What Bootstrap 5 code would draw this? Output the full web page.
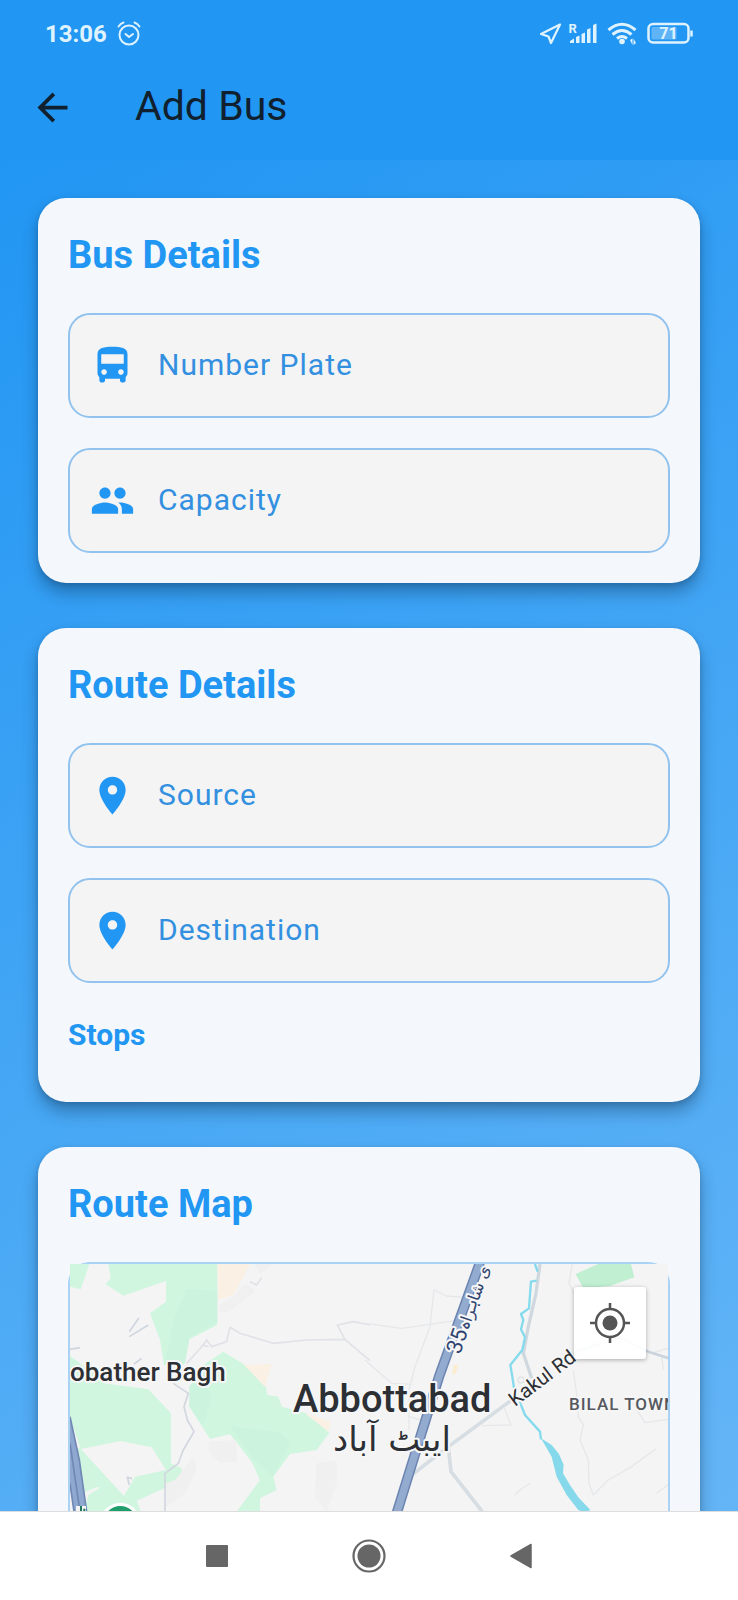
<!DOCTYPE html>
<html lang="en">
<head>
<meta charset="utf-8">
<meta name="viewport" content="width=device-width, initial-scale=1">
<title>Add Bus</title>
<link href="https://cdn.jsdelivr.net/npm/bootstrap@5.3.0/dist/css/bootstrap.min.css" rel="stylesheet">
<style>
  :root { --brand: #2196f3; --ink: #10202e; --grey: #666; }
  body { font-family: Roboto, "Noto Sans", sans-serif; background: var(--brand); }
  svg { display: block; }
  .top-area { background: var(--brand); }
  .status { height: 55px; padding: 13px 43px 0 45px; color: #dff3ff; }
  .clock { font-size: 24px; line-height: 28px; }
  .app-bar { height: 105px; padding: 0 30px; gap: 60px; color: var(--ink); }
  .app-bar h1 { font-size: 41px; line-height: 48px; padding-bottom: 4px; }
  .scroll-area { min-height: 0; overflow-y: auto; scrollbar-width: none; padding: 38px 38px 45px; gap: 45px;
    background: linear-gradient(151deg, #2196f3, #64b5f6); }
  .scroll-area::-webkit-scrollbar { display: none; }
  .panel { --bs-card-bg: #f4f8fc; border-radius: 28px; padding: 30px; color: var(--brand);
    box-shadow: 0 10px 16px rgba(0, 20, 40, .3), 0 2px 5px rgba(0, 20, 40, .16); flex-shrink: 0; }
  .panel h2 { font-size: 38px; line-height: 55px; margin-bottom: 30px; }
  .panel h3 { font-size: 30px; line-height: 40px; margin: 32px 0 17px; }
  .field-list { gap: 30px; }
  .field { height: 105px; padding: 0 20px; gap: 23px; border: 2px solid #92c3ee; border-radius: 22px; background: #f4f4f4;
    font-size: 30px; line-height: 48px; letter-spacing: 1px; color: #3390e0; }
  .field svg { width: 45px; height: 45px; flex: none; fill: var(--brand); }
  .field span { padding-bottom: 2px; }
  .field .form-control { flex: 1 1 0; min-width: 0; font-size: 30px; line-height: 48px; color: var(--ink); box-shadow: none; }
  .map-frame { border: 2px solid #a9d2f5; border-radius: 22px; }
  .map-frame > svg { width: 100%; height: 560px; }
  .halo { paint-order: stroke; stroke: #f6f6f6; stroke-width: 4px; stroke-linejoin: round; }
  .locate { top: 23px; right: 22px; width: 72px; height: 72px; background: rgba(255, 255, 255, .92);
    box-shadow: 0 1px 4px rgba(0, 0, 0, .3); border-radius: 3px; }
  .sys-nav { height: 89px; gap: 100px; background: #fff; border-top: 1px solid #ddd; }
  .sys-nav .btn { width: 52px; height: 52px; }
</style>
</head>
<body class="vh-100 d-flex flex-column overflow-hidden">

<header class="top-area">
  <div class="status d-flex align-items-center justify-content-between">
    <div class="d-flex align-items-center gap-2">
      <span class="clock fw-bold">13:06</span>
      <svg width="30" height="28" viewBox="1 0 30 28" fill="none" stroke="currentColor" stroke-width="2" stroke-linecap="round" stroke-linejoin="round" aria-hidden="true">
        <circle cx="15" cy="15" r="9.500"/><path d="M11.500 14l3.500 3 4-3M4.500 6.500q2-3 5-4M25.500 6.500q-2-3-5-4"/>
      </svg>
    </div>
    <svg width="156" height="28" viewBox="0 0 156 28" fill="none" stroke="currentColor" aria-hidden="true">
      <path d="M21 4.500L2 14l7.500 2.500L12 23z" stroke-width="2.200" stroke-linejoin="round"/>
      <g fill="currentColor" stroke="none">
        <path d="M31 23v-2l4-2.500v4.500zM37 23v-6l3.500-1.500v7.500zM42.500 23v-9l3.500-1.500v10.500zM48 23V9.500l3.500-1.500V23zM54 23V5l3.500-1.500V23z"/>
        <text x="29.500" y="13" font-size="13" font-weight="700">R</text>
        <circle cx="83" cy="21.500" r="2.800"/>
        <path d="M91 20l2.500-1.500v6.500zM94.500 18.500v6.500l2.500-2z"/>
      </g>
      <path d="M69.500 10q13.500-11.500 27 0M73.500 14.500q9.500-8 19 0M78 18.500q5-4 10 0" stroke-width="3"/>
      <rect x="109.500" y="4" width="40" height="18.500" rx="4.500" stroke-width="2.500"/>
      <rect x="112.500" y="7" width="25" height="12.500" rx="1" fill="#5fb4f8" stroke="none"/>
      <path d="M152.500 10.500v6" stroke-width="2.500"/>
      <text x="129.500" y="19" font-size="16" font-weight="700" text-anchor="middle" fill="currentColor" stroke="none">71</text>
    </svg>
  </div>
  <div class="app-bar d-flex align-items-center">
    <button type="button" class="btn border-0 p-0" aria-label="Back">
      <svg width="45" height="45" viewBox="0 0 24 24" fill="#10202e"><path d="M20 11H7.830l5.590-5.590L12 4l-8 8 8 8 1.410-1.410L7.830 13H20v-2z"/></svg>
    </button>
    <h1 class="fw-normal m-0">Add Bus</h1>
  </div>
</header>

<main class="scroll-area flex-grow-1 d-flex flex-column">
  <section class="card panel border-0">
    <h2 class="fw-bold">Bus Details</h2>
    <div class="field-list d-flex flex-column">
      <label class="field d-flex align-items-center" for="plate">
        <svg viewBox="0 0 24 24" aria-hidden="true"><path d="M4 16c0 .88.39 1.670 1 2.220V20c0 .55.45 1 1 1h1c.55 0 1-.45 1-1v-1h8v1c0 .55.45 1 1 1h1c.55 0 1-.45 1-1v-1.780c.61-.55 1-1.340 1-2.220V6c0-3.500-3.580-4-8-4s-8 .5-8 4v10zm3.500 1c-.83 0-1.500-.67-1.500-1.500S6.670 14 7.500 14s1.500.67 1.500 1.500S8.330 17 7.500 17zm9 0c-.83 0-1.500-.67-1.500-1.500s.67-1.500 1.500-1.500 1.500.67 1.500 1.500-.67 1.500-1.500 1.500zm1.500-6H6V6h12v5z"/></svg>
        <span class="text-nowrap">Number Plate</span>
        <input class="form-control border-0 bg-transparent p-0" id="plate" type="text">
      </label>
      <label class="field d-flex align-items-center" for="capacity">
        <svg viewBox="0 0 24 24" aria-hidden="true"><path d="M16 11c1.660 0 2.990-1.340 2.990-3S17.660 5 16 5c-1.660 0-3 1.340-3 3s1.340 3 3 3zm-8 0c1.660 0 2.990-1.340 2.990-3S9.660 5 8 5C6.340 5 5 6.340 5 8s1.340 3 3 3zm0 2c-2.330 0-7 1.170-7 3.500V19h14v-2.500c0-2.330-4.670-3.500-7-3.500zm8 0c-.29 0-.62.02-.97.05 1.160.84 1.970 1.970 1.970 3.450V19h6v-2.500c0-2.330-4.670-3.500-7-3.500z"/></svg>
        <span class="text-nowrap">Capacity</span>
        <input class="form-control border-0 bg-transparent p-0" id="capacity" type="text" inputmode="numeric">
      </label>
    </div>
  </section>

  <section class="card panel border-0">
    <h2 class="fw-bold">Route Details</h2>
    <div class="field-list d-flex flex-column">
      <label class="field d-flex align-items-center" for="source">
        <svg viewBox="0 0 24 24" aria-hidden="true"><path d="M12 2C8.130 2 5 5.130 5 9c0 5.250 7 13 7 13s7-7.750 7-13c0-3.870-3.130-7-7-7zm0 9.500c-1.380 0-2.500-1.120-2.500-2.500s1.120-2.500 2.500-2.500 2.500 1.120 2.500 2.500-1.120 2.500-2.500 2.500z"/></svg>
        <span class="text-nowrap">Source</span>
        <input class="form-control border-0 bg-transparent p-0" id="source" type="text">
      </label>
      <label class="field d-flex align-items-center" for="destination">
        <svg viewBox="0 0 24 24" aria-hidden="true"><path d="M12 2C8.130 2 5 5.130 5 9c0 5.250 7 13 7 13s7-7.750 7-13c0-3.870-3.130-7-7-7zm0 9.500c-1.380 0-2.500-1.120-2.500-2.500s1.120-2.500 2.500-2.500 2.500 1.120 2.500 2.500-1.120 2.500-2.500 2.500z"/></svg>
        <span class="text-nowrap">Destination</span>
        <input class="form-control border-0 bg-transparent p-0" id="destination" type="text">
      </label>
    </div>
    <h3 class="fw-bold">Stops</h3>
  </section>

  <section class="card panel border-0">
    <h2 class="fw-bold">Route Map</h2>
    <div class="map-frame position-relative">
      <svg viewBox="0 0 598 560" preserveAspectRatio="xMinYMin slice" role="img" aria-label="Map of Abbottabad">
        <rect width="1200" height="1200" fill="#f4f4f4"/>

        <!-- western half: parks, hills and minor roads -->
        <g transform="translate(-10 -14) scale(.3333)">
          <g fill="#d0f6e0">
            <path d="M30 42H88L62 118L30 110z"/>
            <path d="M145 42H472V225L388 268L375 340L360 352L312 345L300 270L270 190L318 155V93L190 137L137 103L152 85z"/>
            <path d="M30 318L95 365L130 400L265 418L333 490V640L365 655L368 690L230 752L242 785H72L85 735L122 712L108 712L72 728L50 600L62 590L182 573L275 592L318 660L225 680L192 738L62 597L30 500z"/>
            <path d="M490 305L555 345L618 410L622 435L655 440L665 470L740 490L808 548L770 600L690 612L640 680L650 720L600 745V785H530L600 690L575 635L510 553L450 567L388 470V410L430 345z"/>
          </g>
          <g fill="#c4f1da"><path d="M380 118L472 122V215L388 262L375 340L315 330L345 200z" opacity=".4"/><path d="M510 528L660 548L690 575L640 680L580 625z" opacity=".4"/><path d="M388 470V410L420 370L455 440L430 525z" opacity=".4"/></g>
          <g fill="#faf0e3"><path d="M472 42H570L520 135L475 150z"/><path d="M552 345L635 342L615 410z"/><path d="M735 490L812 515L805 545z"/></g>
          <g fill="#f0f0f0"><path d="M560 100L585 125L500 190L475 185L478 165L520 140z"/><path d="M585 42H640L600 72z"/><path d="M445 575L528 570L530 635L480 638L450 610z"/><path d="M345 690L400 620L410 655L375 730L318 770V700z"/><path d="M770 640L830 630V700L800 785L765 740z"/></g>
          <path d="M62 597L182 573L275 592L318 660L225 680L192 738z" fill="#f4f4f4"/>
          <g fill="none" stroke="#e0e2e7" stroke-width="5" stroke-linejoin="round">
            <path d="M380 340L430 285L440 270L455 290L500 275L510 232L540 250L640 280L740 270L855 268L930 332M855 268L832 225L880 215L930 225"/>
            <path d="M340 400L385 430L372 470L382 510L402 545L370 600L355 640L315 670V785" stroke="#d2d6df"/>
            <path d="M570 95L590 105L605 82M425 285L445 290"/>
            <path d="M208 260L265 225M208 245L237 203M30 298L60 293M222 342L245 325M208 705L202 682L216 686" stroke="#cfd6df"/>
          </g>
          <path d="M30 500L58 630L80 785H42L30 710z" fill="#8fa8d0"/>
          <path d="M30 500L58 630L80 785M30 580L60 785M30 700L42 785" fill="none" stroke="#6f88b4" stroke-width="5"/>
          <circle cx="181" cy="818" r="60" fill="#fff"/><circle cx="181" cy="818" r="50" fill="#1f9d6b"/>
          <path d="M48 785V768H78V785z" fill="#f4f4f4"/>
          <path d="M63 768V785M73 776V785" stroke="#1f7a5c" stroke-width="6"/>
        </g>

        <!-- eastern half: highway, river and side roads -->
        <g transform="translate(295 -14) scale(.3333)" fill="none" stroke-linejoin="round">
          <g stroke="#e5e7ea" stroke-width="4">
            <path d="M0 220L110 235L270 212M0 330L40 365L80 400L140 403M340 145L245 138L207 120L195 230L150 350L132 420V540M132 500L165 510M350 527L438 525L418 475"/>
            <path d="M622 42L612 100L628 130M625 360L635 430L640 500L655 525L645 570L670 630L672 700L685 735L730 690L800 650L872 597M450 735L465 720L495 700M875 730L915 700M800 455L840 518L912 508"/>
            <path d="M860 310L908 295M890 315L895 360"/>
          </g>
          <circle cx="468" cy="390" r="9" stroke="#e0e3e6" stroke-width="4"/>
          <path d="M265 345L280 345L272 372L262 372z" fill="#fbeed0"/>
          <path d="M525 42L513 130L490 230L475 310L500 385" stroke="#d0d8df" stroke-width="10"/>
          <path d="M140 675L250 590L440 450M250 590L258 665L352 785" stroke="#d6dde3" stroke-width="11"/>
          <path d="M630 305L765 262L850 305L912 325" stroke="#ccd5de" stroke-width="8"/>
          <path d="M632 72L700 42H798L808 82L735 108L655 115z" fill="#c0efd1"/>
          <path d="M510 42L518 65M515 92L498 95L492 175L468 192L475 210L468 238L480 262L472 300L436 345L442 380L448 420L468 465L480 495L525 545L528 568" stroke="#85dbed" stroke-width="7"/>
          <path d="M528 565L560 585L582 612L596 645L594 670L615 705L640 742L676 780L660 788L640 780L605 735L575 680L560 620z" fill="#85d9eb"/>
          <path d="M345 38L222 380L95 790" stroke="#6b84b0" stroke-width="31"/>
          <path d="M345 38L222 380L95 790" stroke="#94abd0" stroke-width="22"/>
        </g>

        <g fill="#2c2f34" font-weight="500">
          <text class="halo" x="0" y="117" font-size="26">obather Bagh</text>
          <text class="halo" x="223" y="148" font-size="38">Abbottabad</text>
          <text class="halo" x="322" y="187" font-size="34" font-weight="400" text-anchor="middle" font-family="'DejaVu Sans', sans-serif" direction="rtl" lang="ur">ایبٹ آباد</text>
          <text class="halo" transform="translate(445 143) rotate(-37)" font-size="20" font-weight="400">Kakul Rd</text>
          <text class="halo" x="499" y="146" font-size="17" letter-spacing="1" fill="#55585e">BILAL TOWN</text>
          <g transform="translate(390 91) rotate(-71)" fill="#2f4470" font-weight="400">
            <text class="halo" font-size="22">35</text>
            <text class="halo" x="25" font-size="16" font-family="'DejaVu Sans', sans-serif" direction="rtl" text-anchor="end" lang="ur">ی شاہراہ</text>
          </g>
        </g>
      </svg>
      <button type="button" class="locate btn border-0 p-0 position-absolute d-flex align-items-center justify-content-center" aria-label="My location">
        <svg width="42" height="42" viewBox="0 0 42 42" fill="none" stroke="#555" stroke-width="2.500">
          <circle cx="21" cy="21" r="14"/><circle cx="21" cy="21" r="7.500" fill="#555" stroke="none"/>
          <path d="M21 1v6M21 35v6M1 21h6M35 21h6"/>
        </svg>
      </button>
    </div>
  </section>
</main>

<nav class="sys-nav d-flex align-items-center justify-content-center flex-shrink-0" aria-label="System">
  <button type="button" class="btn border-0 p-0 d-flex align-items-center justify-content-center" aria-label="Recent apps">
    <svg width="22" height="22" viewBox="0 0 22 22"><rect width="22" height="22" rx="1" fill="#666"/></svg>
  </button>
  <button type="button" class="btn border-0 p-0 d-flex align-items-center justify-content-center" aria-label="Home">
    <svg width="34" height="34" viewBox="0 0 34 34"><circle cx="17" cy="17" r="15.500" fill="none" stroke="#666" stroke-width="2.200"/><circle cx="17" cy="17" r="11.500" fill="#666"/></svg>
  </button>
  <button type="button" class="btn border-0 p-0 d-flex align-items-center justify-content-center" aria-label="Back">
    <svg width="22" height="26" viewBox="0 0 22 26"><path d="M21 1.500v23L1 13z" fill="#666" stroke="#666" stroke-width="1.500" stroke-linejoin="round"/></svg>
  </button>
</nav>

<script src="https://cdn.jsdelivr.net/npm/bootstrap@5.3.0/dist/js/bootstrap.bundle.min.js"></script>
</body>
</html>
